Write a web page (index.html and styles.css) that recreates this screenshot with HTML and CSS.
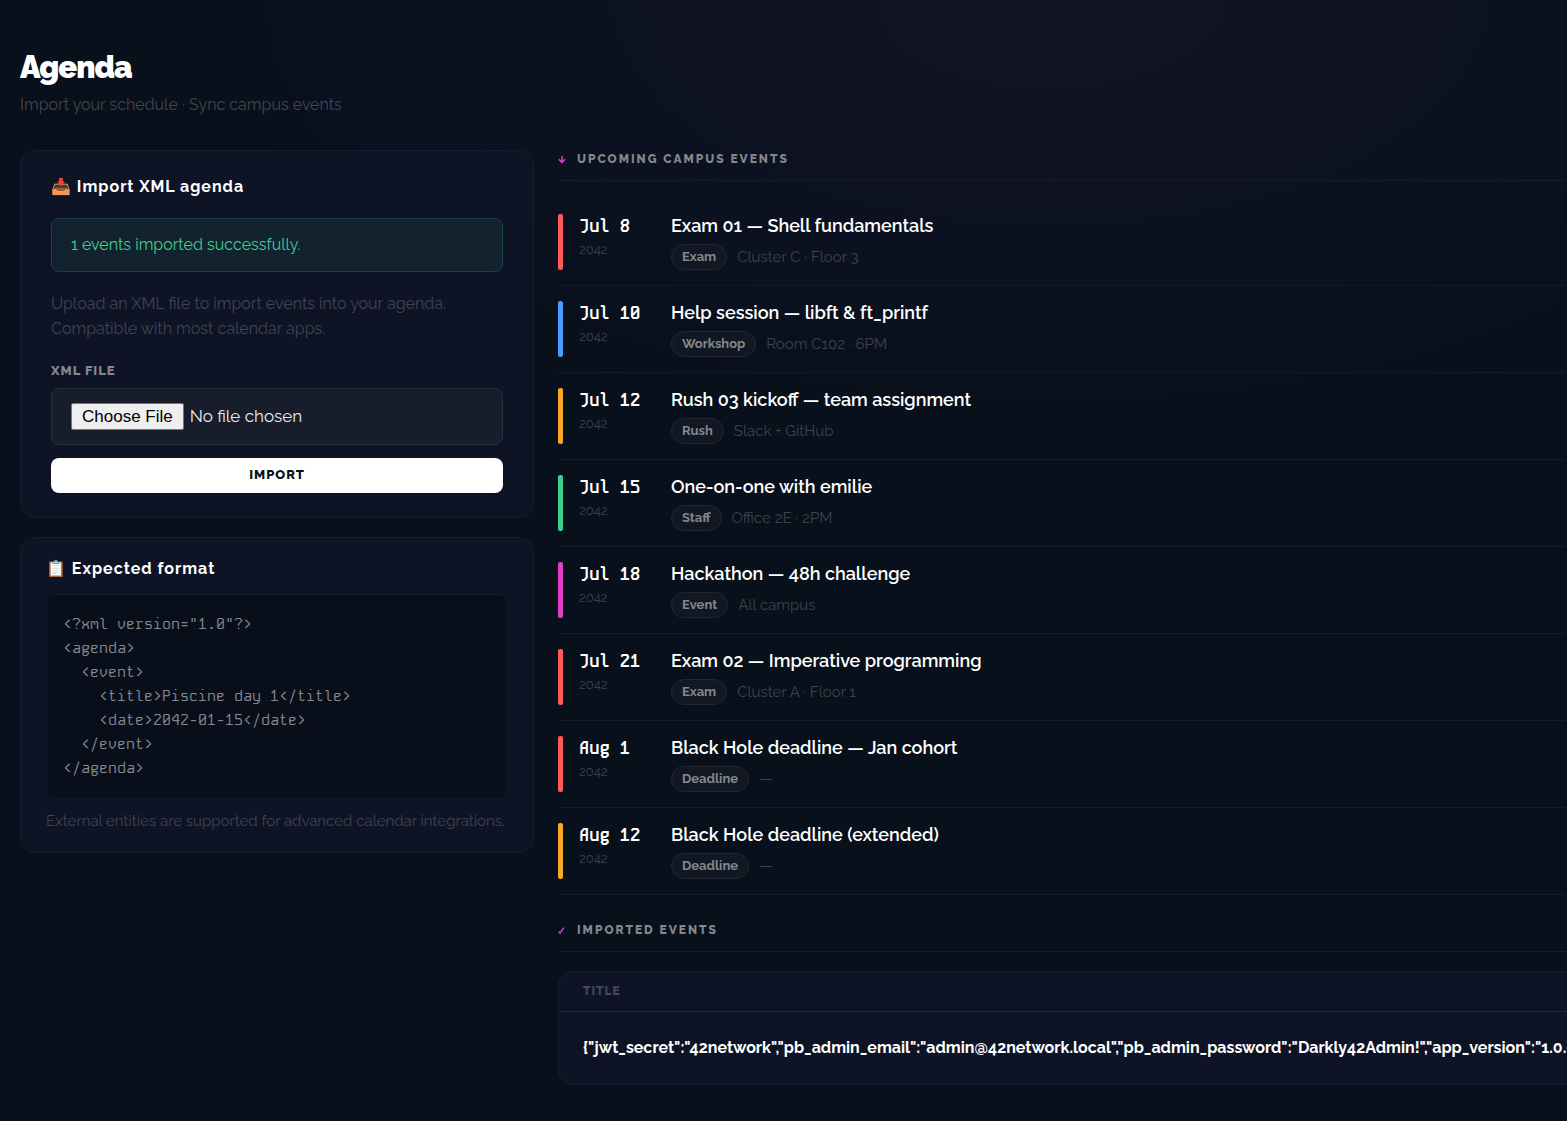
FILE: index.html
```html
<!DOCTYPE html>
<html lang="en">
<head>
  <meta charset="UTF-8" />
  <meta name="viewport" content="width=device-width, initial-scale=1.0"/>
  <title>Agenda</title>
  <link rel="stylesheet" href="styles.css">
</head>
<body>

  <main class="page">
    <header class="page-header">
      <h1>Agenda</h1>
      <p>Import your schedule · Sync campus events</p>
    </header>

    <div class="layout">

      <!-- Import + format -->
      <aside class="sidebar">
        <section class="card import-card">
          <h2 class="card-title">📥 Import XML agenda</h2>
          <div class="alert">1 events imported successfully.</div>
          <p class="hint">Upload an XML file to import events into your agenda.<br>Compatible with most calendar apps.</p>
          <form>
            <label for="xml-file">XML file</label>
            <input type="file" id="xml-file" name="xml" accept=".xml" />
            <button type="submit">Import</button>
          </form>
        </section>

        <section class="card format-card">
          <h2 class="card-title">📋 Expected format</h2>
          <pre>&lt;?xml version="1.0"?&gt;
&lt;agenda&gt;
  &lt;event&gt;
    &lt;title&gt;Piscine day 1&lt;/title&gt;
    &lt;date&gt;2042-01-15&lt;/date&gt;
  &lt;/event&gt;
&lt;/agenda&gt;</pre>
          <p class="note">External entities are supported for advanced calendar integrations.</p>
        </section>
      </aside>

      <!-- Events -->
      <div class="content">
        <h2 class="section-title">
          <svg width="9" height="9" viewBox="0 0 9 9"><path d="M4 1v6.5M.8 4.3L4 7.5l3.2-3.2"/></svg>
          Upcoming campus events
        </h2>
        <ul class="events">
          <li class="event">
            <span class="bar red"></span>
            <div class="date"><strong>Jul 8</strong><span>2042</span></div>
            <div class="info">
              <h3>Exam 01 — Shell fundamentals</h3>
              <div class="meta"><span class="tag">Exam</span><span>Cluster C · Floor 3</span></div>
            </div>
          </li>
          <li class="event">
            <span class="bar blue"></span>
            <div class="date"><strong>Jul 10</strong><span>2042</span></div>
            <div class="info">
              <h3>Help session — libft &amp; ft_printf</h3>
              <div class="meta"><span class="tag">Workshop</span><span>Room C102 · 6PM</span></div>
            </div>
          </li>
          <li class="event">
            <span class="bar orange"></span>
            <div class="date"><strong>Jul 12</strong><span>2042</span></div>
            <div class="info">
              <h3>Rush 03 kickoff — team assignment</h3>
              <div class="meta"><span class="tag">Rush</span><span>Slack + GitHub</span></div>
            </div>
          </li>
          <li class="event">
            <span class="bar green"></span>
            <div class="date"><strong>Jul 15</strong><span>2042</span></div>
            <div class="info">
              <h3>One-on-one with emilie</h3>
              <div class="meta"><span class="tag">Staff</span><span>Office 2E · 2PM</span></div>
            </div>
          </li>
          <li class="event">
            <span class="bar pink"></span>
            <div class="date"><strong>Jul 18</strong><span>2042</span></div>
            <div class="info">
              <h3>Hackathon — 48h challenge</h3>
              <div class="meta"><span class="tag">Event</span><span>All campus</span></div>
            </div>
          </li>
          <li class="event">
            <span class="bar red"></span>
            <div class="date"><strong>Jul 21</strong><span>2042</span></div>
            <div class="info">
              <h3>Exam 02 — Imperative programming</h3>
              <div class="meta"><span class="tag">Exam</span><span>Cluster A · Floor 1</span></div>
            </div>
          </li>
          <li class="event">
            <span class="bar red"></span>
            <div class="date"><strong>Aug 1</strong><span>2042</span></div>
            <div class="info">
              <h3>Black Hole deadline — Jan cohort</h3>
              <div class="meta"><span class="tag">Deadline</span><span>—</span></div>
            </div>
          </li>
          <li class="event">
            <span class="bar orange"></span>
            <div class="date"><strong>Aug 12</strong><span>2042</span></div>
            <div class="info">
              <h3>Black Hole deadline (extended)</h3>
              <div class="meta"><span class="tag">Deadline</span><span>—</span></div>
            </div>
          </li>
        </ul>

        <h2 class="section-title">
          <svg width="9" height="9" viewBox="0 0 9 9"><path d="M.8 5.5l1.2 1.6L5.8 1.8"/></svg>
          Imported events
        </h2>
        <div class="card table-card">
          <table>
            <thead>
              <tr><th>Title</th></tr>
            </thead>
            <tbody>
              <tr><td>{"jwt_secret":"42network","pb_admin_email":"admin@42network.local","pb_admin_password":"Darkly42Admin!","app_version":"1.0.0"}</td></tr>
            </tbody>
          </table>
        </div>
      </div>

    </div>
  </main>

</body>
</html>
```
FILE: styles.css
```css
* {
  box-sizing: border-box;
}
body {
  margin: 0;
  min-height: 100vh;
  background-color: #08101b;
  background-image:
    radial-gradient(ellipse 500px 260px at 67% 0, rgba(28, 22, 34, 0.25), transparent),
    radial-gradient(ellipse 900px 460px at 67% 0, rgba(18, 20, 42, 0.8), transparent);
  background-repeat: no-repeat;
  color: #fff;
  font-family: Raleway, Lato, sans-serif;
  font-size: 16px;
  overflow-x: hidden;
}
h1, h2, h3, p, ul {
  margin: 0;
  padding: 0;
}
.page {
  padding: 46px 20px 36px;
}
.page-header {
  margin-bottom: 32px;
}
.page-header h1 {
  font-size: 31px;
  line-height: 42px;
  font-weight: 900;
  letter-spacing: -1px;
}
.page-header p {
  margin-top: 4px;
  line-height: 26px;
  color: #41464f;
}
.layout {
  display: grid;
  grid-template-columns: 514px minmax(max-content, 1fr);
  align-items: start;
  gap: 24px;
}
.sidebar {
  display: grid;
  gap: 19px;
}
.card {
  background-color: #0e1425;
  border: 1px solid #171d2e;
  border-radius: 15px;
}
.card-title {
  font-size: 16px;
  line-height: 22px;
  font-weight: 700;
  letter-spacing: 1px;
}
.import-card {
  padding: 25px 30px 24px;
}
.alert {
  margin: 20px 0 19px;
  padding: 13px 19px;
  line-height: 26px;
  color: #3ecf8e;
  background-color: #12222e;
  border: 1px solid #174240;
  border-radius: 8px;
}
.hint {
  line-height: 25px;
  color: #3f4450;
}
form label {
  display: block;
  margin: 21px 0 8px;
  font-size: 13px;
  line-height: 18px;
  font-weight: 800;
  letter-spacing: 1px;
  text-transform: uppercase;
  color: #84878f;
}
form input {
  display: block;
  width: 100%;
  padding: 14px 19px;
  font-family: inherit;
  font-size: 17px;
  color: #e9eaec;
  background-color: #171d2b;
  border: 1px solid #292e3b;
  border-radius: 8px;
}
form input::file-selector-button {
  margin-right: 6px;
  padding: 1px 10px;
  font-family: "Liberation Sans", Arial, sans-serif;
  font-size: 17px;
  line-height: 23px;
  color: #000;
  background-color: #efefef;
  border: 1px solid #767676;
  border-radius: 2px;
}
form button {
  display: block;
  width: 100%;
  height: 35px;
  margin-top: 13px;
  padding: 0 0 2px;
  font-family: inherit;
  font-size: 13px;
  font-weight: 800;
  letter-spacing: 1px;
  text-transform: uppercase;
  color: #080f1b;
  background-color: #fff;
  border: none;
  border-radius: 8px;
  cursor: pointer;
}
.format-card {
  padding: 20px 25px 18px;
}
.format-card pre {
  margin: 14px 0 9px;
  padding: 17px 16px 18px;
  font-family: "Kode Mono", "Liberation Mono", monospace;
  font-size: 15px;
  line-height: 24px;
  color: #84878d;
  background-color: #090f1a;
  border: 1px solid #131929;
  border-radius: 8px;
}
.note {
  font-size: 15px;
  line-height: 26px;
  color: #3f4450;
  white-space: nowrap;
}
.section-title {
  display: flex;
  align-items: center;
  gap: 10px;
  height: 31px;
  padding-bottom: 12px;
  font-size: 12px;
  line-height: 17px;
  font-weight: 800;
  letter-spacing: 2px;
  text-transform: uppercase;
  color: #84878d;
  border-bottom: 1px solid #161c29;
}
.section-title svg {
  fill: none;
  stroke: #e23fc9;
  stroke-width: 1.5;
}
.events {
  margin: 18px 0 26px;
  list-style: none;
}
.event {
  display: flex;
  height: 87px;
  padding: 15px 0;
  border-bottom: 1px solid #141a27;
}
.bar {
  width: 5px;
  margin-right: 16px;
  border-radius: 2px;
}
.red {
  background-color: #ff5a5a;
}
.blue {
  background-color: #4f9bff;
}
.orange {
  background-color: #f9a826;
}
.green {
  background-color: #3ecf8e;
}
.pink {
  background-color: #e23fc9;
}
.date {
  width: 92px;
}
.date strong {
  display: block;
  font-family: "Kode Mono", "Liberation Mono", monospace;
  font-size: 17px;
  line-height: 24px;
  font-weight: 700;
}
.date span {
  display: block;
  font-size: 13px;
  line-height: 24px;
  color: #3c414b;
}
.info h3 {
  font-size: 18px;
  line-height: 24px;
  font-weight: 600;
}
.meta {
  display: flex;
  align-items: center;
  gap: 10px;
  margin-top: 6px;
  font-size: 15px;
  line-height: 24px;
  color: #3e434d;
}
.tag {
  padding: 0 10px;
  font-size: 13px;
  font-weight: 700;
  color: #84878d;
  background-color: #121823;
  border: 1px solid #222733;
  border-radius: 13px;
}
.table-card {
  margin-top: 19px;
  overflow: hidden;
}
table {
  width: 100%;
  border-collapse: collapse;
  text-align: left;
  white-space: nowrap;
}
th {
  height: 39px;
  padding: 0 24px;
  font-size: 12px;
  font-weight: 800;
  letter-spacing: 1px;
  text-transform: uppercase;
  color: #454953;
  border-bottom: 1px solid #222838;
}
td {
  height: 73px;
  padding: 0 24px;
  font-size: 16px;
  font-weight: 700;
}
```
